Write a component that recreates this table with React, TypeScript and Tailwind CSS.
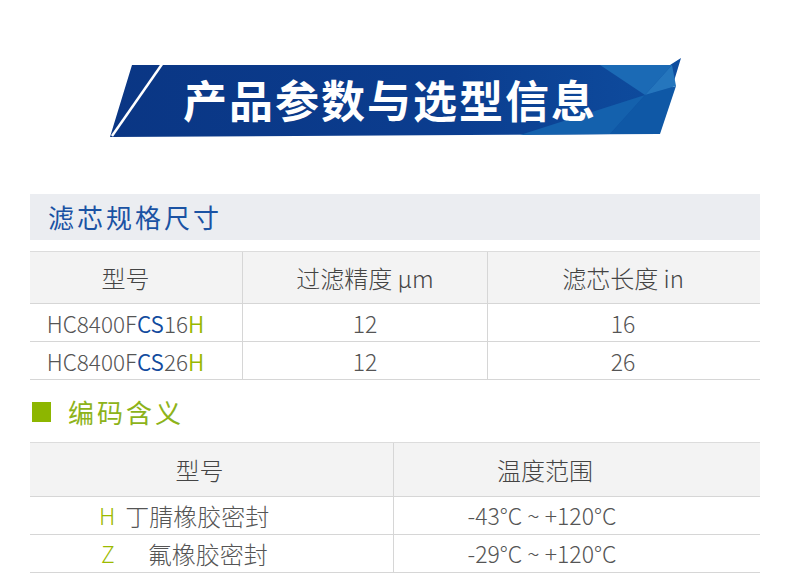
import React from "react";

const font = { fontFamily: '"Noto Sans CJK SC", "Noto Sans", sans-serif' };

function Banner() {
  return (
    <div className="relative ml-[110px] h-[80px] w-[572px]">
      <svg width="572" height="80" viewBox="0 0 572 80" className="block">
        <defs>
          <linearGradient id="bg" x1="0" y1="0" x2="1" y2="0">
            <stop offset="0" stopColor="#0a3684" />
            <stop offset="0.6" stopColor="#0b3d8f" />
            <stop offset="1" stopColor="#0e4d9f" />
          </linearGradient>
        </defs>
        <polygon points="22,8 560,8 571,1 548,77 0,80" fill="url(#bg)" />
        <polygon points="490,8 562,8 535,38" fill="#1b6ab5" />
        <polygon points="535,38 566,29 550,77 500,77" fill="#0f58a6" />
        <polygon points="410,78 535,38 500,77" fill="#1461ad" />
        <polygon points="535,38 562,8 566,29" fill="#2576bd" />
        <line x1="57" y1="0" x2="2" y2="79" stroke="#ffffff" strokeWidth="2.5" />
      </svg>
      <div
        className="absolute inset-0 flex items-center justify-center pr-[12px] pt-[4px] text-[44px] font-bold leading-none tracking-[2px] text-white"
        style={font}
      >
        产品参数与选型信息
      </div>
    </div>
  );
}

function Model({ n }: { n: string }) {
  return (
    <span className="text-[22.5px]">
      HC8400F<span className="font-[350] text-[#114a9e]">CS</span>
      {n}
      <span className="font-[350] text-[#98b800]">H</span>
    </span>
  );
}

export default function App() {
  return (
    <div className="h-[577px] w-[790px] overflow-hidden bg-white pt-[57px]" style={font}>
      <Banner />

      <div className="mx-[30px] mt-[57px] flex h-[46px] items-center bg-[#ebedf1] pl-[18px]">
        <span className="text-[26px] leading-none tracking-[3px] text-[#1a52a3]">滤芯规格尺寸</span>
      </div>

      <div className="mx-[30px] mt-[11px] border-t border-[#dcdcdc] text-[23px] font-light text-[#555]">
        <div className="grid h-[52px] grid-cols-[213px_245px_270px] border-b border-[#d6d6d6] bg-[#f3f3f3] text-[24px] text-[#444]">
          <div className="flex items-center justify-center border-r border-[#d6d6d6] pr-[21px]">型号</div>
          <div className="flex items-center justify-center border-r border-[#d6d6d6]">过滤精度 μm</div>
          <div className="flex items-center justify-center">滤芯长度 in</div>
        </div>
        {[
          ["16", "12", "16"],
          ["26", "12", "26"],
        ].map((r, i) => (
          <div key={i} className="grid h-[38px] grid-cols-[213px_245px_270px] border-b border-[#d6d6d6]">
            <div className="flex items-center justify-center border-r border-[#d6d6d6] pr-[21px] pt-[2px]">
              <Model n={r[0]} />
            </div>
            <div className="flex items-center justify-center border-r border-[#d6d6d6] pt-[2px]">{r[1]}</div>
            <div className="flex items-center justify-center pt-[2px]">{r[2]}</div>
          </div>
        ))}
      </div>

      <div className="mt-[19px] flex items-center pl-[32px]">
        <div className="h-[20px] w-[19px] bg-[#8db600]" />
        <span className="ml-[17px] text-[26px] leading-none tracking-[3px] text-[#8db31a]">编码含义</span>
      </div>

      <div className="mx-[30px] mt-[17px] border-t border-[#dcdcdc] text-[23px] font-light text-[#555]">
        <div className="grid h-[54px] grid-cols-[364px_364px] border-b border-[#d6d6d6] bg-[#f3f3f3] text-[24px] text-[#444]">
          <div className="flex items-center justify-center border-r border-[#d6d6d6] pr-[24px]">型号</div>
          <div className="flex items-center justify-center pr-[62px]">温度范围</div>
        </div>
        <div className="grid h-[38px] grid-cols-[364px_364px] border-b border-[#d6d6d6]">
          <div className="flex items-center border-r border-[#d6d6d6] pl-[69px]">
            <span className="text-[#9cba00]">H</span>
            <span className="ml-[10px] text-[24px]">丁腈橡胶密封</span>
          </div>
          <div className="flex items-center justify-center pr-[68px]">-43°C ~ +120°C</div>
        </div>
        <div className="grid h-[38px] grid-cols-[364px_364px] border-b border-[#d6d6d6]">
          <div className="flex items-center border-r border-[#d6d6d6] pl-[71px]">
            <span className="text-[#9cba00]">Z</span>
            <span className="ml-[33px] text-[24px]">氟橡胶密封</span>
          </div>
          <div className="flex items-center justify-center pr-[68px]">-29°C ~ +120°C</div>
        </div>
      </div>
    </div>
  );
}
